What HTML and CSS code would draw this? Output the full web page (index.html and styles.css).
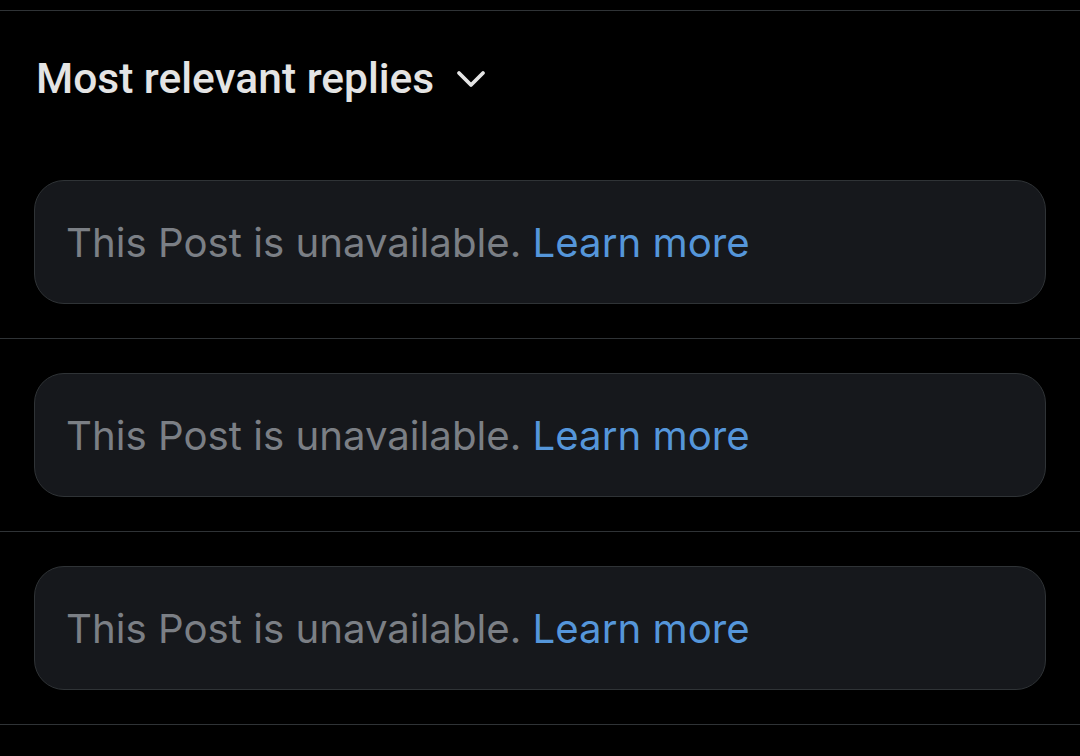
FILE: index.html
```html
<!DOCTYPE html>
<html>
<head>
  <title>Replies</title>
  <link rel="stylesheet" href="styles.css">
</head>
<body>
  <div class="top-rule"></div>
  <div class="sort-bar">
    <span class="sort-label">Most relevant replies</span>
    <svg class="chevron" width="30" height="22" viewBox="0 0 30 22">
      <path d="M3 4 L15 16 L27 4" fill="none" stroke="#e4e4e4" stroke-width="3.8" stroke-linecap="round" stroke-linejoin="round"/>
    </svg>
  </div>
  <div class="reply">
    <div class="tombstone">This Post is unavailable. <a class="learn-more" href="#">Learn more</a></div>
  </div>
  <div class="reply">
    <div class="tombstone">This Post is unavailable. <a class="learn-more" href="#">Learn more</a></div>
  </div>
  <div class="reply">
    <div class="tombstone">This Post is unavailable. <a class="learn-more" href="#">Learn more</a></div>
  </div>
</body>
</html>
```

FILE: styles.css
```css
body {
  margin: 0;
  background-color: #000;
  font-family: Inter, "Noto Sans", sans-serif;
  padding-top: 10px;
}

.top-rule {
  height: 1px;
  background-color: #2f3336;
}

.sort-bar {
  display: flex;
  align-items: center;
  gap: 22px;
  padding: 0 36px;
  height: 135px;
  box-sizing: border-box;
}

.sort-label {
  font-family: Roboto, sans-serif;
  font-weight: 500;
  font-size: 42.5px;
  color: #e4e4e4;
}

.chevron {
  margin-top: 2px;
}

.reply {
  padding: 34px;
  border-bottom: 1px solid #2f3336;
}

.tombstone {
  height: 122px;
  display: flex;
  align-items: center;
  padding: 0 31px;
  background-color: #16181c;
  border: 1px solid #2f3336;
  border-radius: 30px;
  font-size: 40.2px;
  color: #7b7f85;
  white-space: pre;
}

.learn-more {
  color: #5596da;
  text-decoration: none;
}
```
